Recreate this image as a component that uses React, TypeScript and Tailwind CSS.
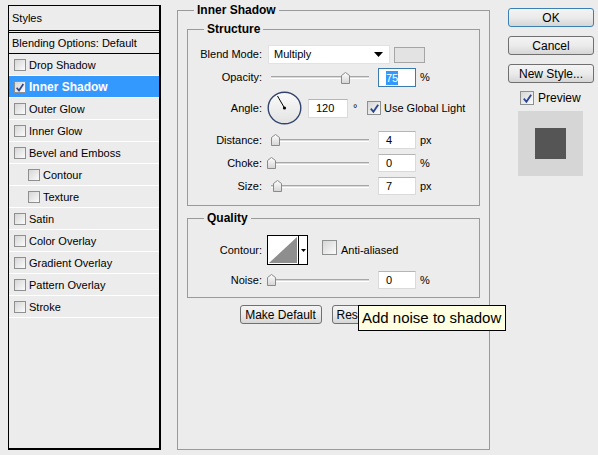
import React from "react";

const styleItems = [
  { name: "Drop Shadow" },
  { name: "Inner Shadow", active: true, checked: true },
  { name: "Outer Glow" },
  { name: "Inner Glow" },
  { name: "Bevel and Emboss" },
  { name: "Contour", sub: true },
  { name: "Texture", sub: true },
  { name: "Satin" },
  { name: "Color Overlay" },
  { name: "Gradient Overlay" },
  { name: "Pattern Overlay" },
  { name: "Stroke" },
];

function CheckBox({ checked, className = "w-[14px] h-[14px]" }: { checked?: boolean; className?: string }) {
  return (
    <span
      className={`${className} shrink-0 inline-flex items-center justify-center border border-[#8e8f8f] bg-linear-to-br from-[#d6d6d6] to-[#fbfbfb]`}
    >
      {checked && (
        <svg viewBox="0 0 12 12" className="w-[11px] h-[11px]">
          <path d="M2 6.2 L4.8 9.6 L10 1.8" fill="none" stroke="#2b4590" strokeWidth="2" />
        </svg>
      )}
    </span>
  );
}

function Button({ label, focus, className = "" }: { label: string; focus?: boolean; className?: string }) {
  return (
    <div
      className={`h-[19px] flex items-center justify-center rounded-[3px] border bg-linear-to-b from-[#f4f4f4] via-[#ebebeb] to-[#d6d6d6] text-[12px] text-black ${
        focus ? "border-[#3c7fb1]" : "border-[#707070]"
      } ${className}`}
    >
      {label}
    </div>
  );
}

function Slider({ value }: { value: number }) {
  return (
    <div className="relative w-[108px] h-[18px] flex items-center">
      <div className="mx-[5px] flex-1 h-[3px] border-t border-[#a7a7a7] border-b border-b-white bg-[#d9d9d9]" />
      <svg width="9" height="12" viewBox="0 0 9 12" className="absolute top-[3px]" style={{ left: value + 0.5 }}>
        <defs>
          <linearGradient id="thumbg" x1="0" y1="0" x2="0" y2="1">
            <stop offset="0" stopColor="#ffffff" />
            <stop offset="1" stopColor="#d4d4d4" />
          </linearGradient>
        </defs>
        <path d="M4.5 0.5 L8.5 3.5 L8.5 11.5 L0.5 11.5 L0.5 3.5 Z" fill="url(#thumbg)" stroke="#8a8a8a" />
      </svg>
    </div>
  );
}

function NumBox({ value, focus, className = "w-[38px] h-[19px]" }: { value: string; focus?: boolean; className?: string }) {
  return (
    <div
      className={`${className} shrink-0 bg-white border flex items-center pl-[7px] text-[11px] text-black ${
        focus ? "border-[#3d7bad]" : "border-[#dadada] border-t-[#b5b5b5]"
      }`}
    >
      {focus ? <span className="bg-[#3399ff] text-white leading-[14px]">{value}</span> : value}
    </div>
  );
}

function Label({ text }: { text: string }) {
  return <span className="w-[74px] shrink-0 text-right text-[11px] text-black">{text}</span>;
}

function SliderRow({ label, value, num, unit, className = "" }: { label: string; value: number; num: string; unit: string; className?: string }) {
  return (
    <div className={`flex items-center ${className}`}>
      <Label text={label} />
      <div className="ml-[4px]">
        <Slider value={value} />
      </div>
      <div className="ml-[4px]">
        <NumBox value={num} className="w-[38px] h-[18px]" />
      </div>
      <span className="ml-[4px] text-[11px]">{unit}</span>
    </div>
  );
}

export default function App() {
  return (
    <div className="relative w-[598px] h-[455px] overflow-hidden bg-[#ececec] flex items-start font-['Liberation_Sans',Arial,sans-serif] text-black select-none">
      {/* Styles list */}
      <div className="ml-[8px] mt-[5px] w-[153px] h-[445px] border-l border-t border-r-2 border-b-2 border-black flex flex-col">
        <div className="h-[25px] flex items-center pl-[3px] text-[11px] border-b border-black">Styles</div>
        <div className="mt-[1px] h-[22px] flex items-center pl-[3px] text-[11px] border-t border-b border-black">
          Blending Options: Default
        </div>
        {styleItems.map((item) => (
          <div
            key={item.name}
            className={`h-[22px] pt-[1px] flex items-center border-b border-white ${item.sub ? "pl-[19px]" : "pl-[5px]"} ${
              item.active ? "bg-[#3399ff] text-white font-bold text-[12px]" : "text-[11px]"
            }`}
          >
            <CheckBox checked={item.checked} className="w-[12px] h-[12px]" />
            <span className="ml-[3px]">{item.name}</span>
          </div>
        ))}
      </div>

      {/* Inner Shadow panel */}
      <fieldset className="ml-[16px] mt-[3px] w-[313px] h-[447px] border border-[#9a9a9a] px-[9px]">
        <legend className="ml-[7px] px-[3px] text-[12px] font-bold leading-[14px]">Inner Shadow</legend>

        <fieldset className="mt-[5px] border border-[#9a9a9a] pt-[9px] pb-[10px]">
          <legend className="ml-[16px] px-[3px] text-[12px] font-bold leading-[14px]">Structure</legend>

          <div className="flex items-center h-[19px]">
            <Label text="Blend Mode:" />
            <div className="ml-[6px] w-[122px] h-[19px] bg-white border border-[#e2e2e2] flex items-center pl-[5px] text-[11px]">
              <span className="flex-1">Multiply</span>
              <svg width="9" height="5" viewBox="0 0 9 5" className="mr-[6px]">
                <path d="M0 0 H9 L4.5 5 Z" fill="#000" />
              </svg>
            </div>
            <div className="ml-[4px] w-[31px] h-[16px] bg-[#e3e3e3] border border-[#a5a5a5]" />
          </div>

          <div className="mt-[4px] flex items-center">
            <Label text="Opacity:" />
            <div className="ml-[4px]">
              <Slider value={74} />
            </div>
            <div className="ml-[4px]">
              <NumBox value="75" focus />
            </div>
            <span className="ml-[4px] text-[11px]">%</span>
          </div>

          <div className="mt-[4px] flex items-center h-[34px]">
            <Label text="Angle:" />
            <svg width="35" height="34" viewBox="0 0 35 34" className="ml-[5px] shrink-0">
              <defs>
                <linearGradient id="dialg" x1="0" y1="0" x2="0" y2="1">
                  <stop offset="0" stopColor="#fbfbfb" />
                  <stop offset="1" stopColor="#e2e2e2" />
                </linearGradient>
              </defs>
              <ellipse cx="17.5" cy="17" rx="16.3" ry="15.8" fill="url(#dialg)" stroke="#33456f" strokeWidth="1.4" />
              <line x1="17.5" y1="17" x2="10.5" y2="5" stroke="#000" strokeWidth="1" />
              <circle cx="17.5" cy="17" r="1.6" fill="#000" />
            </svg>
            <div className="ml-[6px]">
              <NumBox value="120" className="w-[40px] h-[19px]" />
            </div>
            <span className="ml-[5px] w-[14px] text-[11px]">°</span>
            <CheckBox checked className="w-[14px] h-[14px]" />
            <span className="ml-[3px] text-[11px]">Use Global Light</span>
          </div>

          <SliderRow label="Distance:" value={4} num="4" unit="px" className="mt-[6px]" />
          <SliderRow label="Choke:" value={0} num="0" unit="%" className="mt-[5px]" />
          <SliderRow label="Size:" value={6} num="7" unit="px" className="mt-[5px]" />
        </fieldset>

        <fieldset className="mt-[5px] border border-[#9a9a9a] pt-[10px] pb-[8px]">
          <legend className="ml-[16px] px-[3px] text-[12px] font-bold leading-[14px]">Quality</legend>

          <div className="flex items-center h-[30px]">
            <Label text="Contour:" />
            <div className="ml-[5px] w-[41px] h-[30px] flex border border-black bg-white shrink-0">
              <svg width="30" height="28" viewBox="0 0 30 28" className="shrink-0">
                <path d="M1 27 L29 1 L29 27 Z" fill="#8e8e8e" />
              </svg>
              <div className="flex-1 border-l border-black flex items-center justify-center">
                <svg width="5" height="3" viewBox="0 0 5 3">
                  <path d="M0 0 H5 L2.5 3 Z" fill="#000" />
                </svg>
              </div>
            </div>
            <div className="ml-[14px]">
              <CheckBox className="w-[15px] h-[15px]" />
            </div>
            <span className="ml-[4px] text-[11px]">Anti-aliased</span>
          </div>

          <SliderRow label="Noise:" value={0} num="0" unit="%" className="mt-[6px]" />
        </fieldset>

        <div className="mt-[7px] flex justify-center gap-[10px]">
          <Button label="Make Default" className="w-[82px]" />
          <Button label="Reset to Default" className="w-[96px]" />
        </div>
      </fieldset>

      {/* Right column */}
      <div className="ml-[18px] w-[86px] flex flex-col">
        <Button label="OK" focus className="mt-[8px]" />
        <Button label="Cancel" className="mt-[9px]" />
        <Button label="New Style..." className="mt-[9px]" />
        <div className="mt-[6px] ml-[12px] flex items-center">
          <CheckBox checked className="w-[14px] h-[14px]" />
          <span className="ml-[4px] text-[12px]">Preview</span>
        </div>
        <div className="mt-[4px] ml-[10px] w-[65px] h-[65px] bg-[#d6d6d6] flex items-center justify-center">
          <div className="w-[31px] h-[31px] bg-[#555555]" />
        </div>
      </div>

      {/* Tooltip */}
      <div className="absolute left-[358px] top-[305px] w-[148px] h-[26px] bg-[#ffffe1] border border-black flex items-center pl-[3px] text-[15px] text-black">
        Add noise to shadow
      </div>
    </div>
  );
}
